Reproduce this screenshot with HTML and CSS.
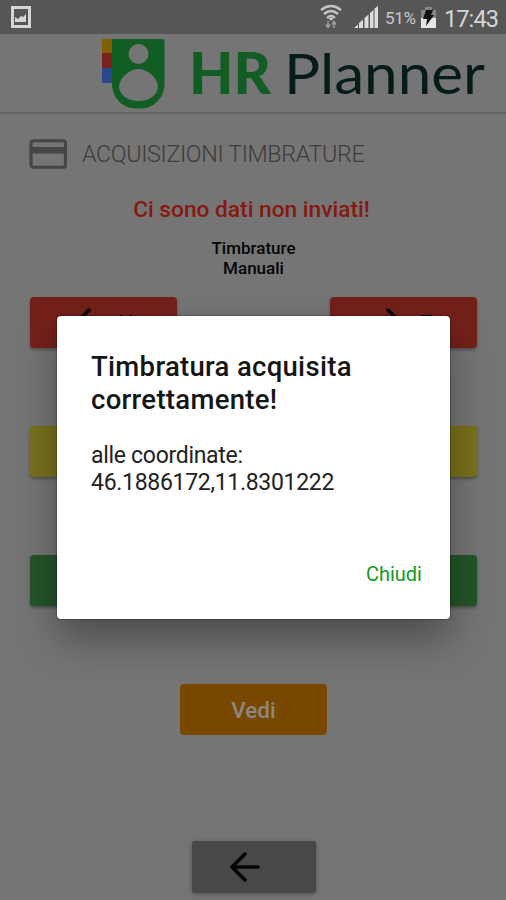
FILE: index.html
```html
<!DOCTYPE html>
<html lang="it">
<head>
<meta charset="utf-8">
<title>HR Planner</title>
<link rel="stylesheet" href="styles.css">
</head>
<body>
<div class="status">
  <svg class="picture" width="20" height="22" viewBox="0 0 20 22"><path fill="#d6d6d6" fill-rule="evenodd" d="M0 0h20v22H0zM3 3v16h14V3zM4 16v-5l3 2 3-3 2 1 3-3v8z"/></svg>
  <div class="status-right">
    <svg width="128" height="34" viewBox="0 0 128 34">
      <g fill="none" stroke="#c4c4c4" stroke-width="2.400"><path d="M1 10Q11 2 21 10M4 14Q11 8 18 14M7 18Q11 14 15 18"/></g>
      <path fill="#cfcfcf" d="M8.500 18h5L11 21z"/>
      <path fill="none" stroke="#a0a0a0" stroke-width="1.500" d="M8 21v6M6 24.500l2 3 2-3M14 28v-6M12 24.500l2-3 2 3"/>
      <path fill="#ddd" d="M34 28l4-3.500V28zM39 28v-5l4-3.500v8.500zM44.500 28V18l4-3.500V28zM50 28V13l3.500-3v18zM54.500 28V8.500L58 6v22z"/>
      <text x="65" y="24" class="percent" textLength="31">51%</text>
      <path fill="#858585" d="M105 7h7v3h4v8h-15v-8h4z"/><path fill="#e5e5e5" d="M101 18h15v10h-15z"/>
      <path fill="#111" d="M106 10h7l-2 5h3l-8 11 1-7h-4z"/>
    </svg>
    <span class="clock">17:43</span>
  </div>
</div>
<header class="header">
  <svg width="506" height="79" viewBox="0 34 506 79">
    <path fill="#806000" d="M102 39h11v15h-11z"/><path fill="#7c201b" d="M102 53h11v16h-11z"/><path fill="#27498a" d="M102 68h11v15h-11z"/>
    <path fill="#115d23" d="M112 39h50q2.500 0 2.500 3v42c0 14-11 24.500-24 24.500h-5c-13 0-23.500-11-23.500-24.500z"/>
    <circle cx="138.500" cy="54" r="10" fill="#757575"/>
    <path fill="#757575" d="M119 86C120 77 130 69 138.500 69S157 77 158 86C158 95 149 101 138.500 101S119 95 119 86z"/>
    <text class="brand-hr" x="189" y="94" textLength="82" lengthAdjust="spacingAndGlyphs">HR</text>
    <text class="brand-planner" x="284" y="94" textLength="201" lengthAdjust="spacingAndGlyphs">Planner</text>
  </svg>
</header>
<main class="page">
  <h1 class="title">
    <svg width="38" height="30" viewBox="0 0 38 30"><rect x="2" y="1.750" width="34.500" height="26.500" rx="2.500" fill="none" stroke="#454545" stroke-width="3.200"/><path fill="#454545" d="M2 8h34v6.500H2z"/></svg>
    <span>ACQUISIZIONI TIMBRATURE</span>
  </h1>
  <p class="warning">Ci sono dati non inviati!</p>
  <p class="mode">Timbrature<br>Manuali</p>
  <div class="row">
    <div class="btn red"><svg width="30" height="30" viewBox="0 0 30 30"><path class="arrow" d="M29 15H2M15 2L2 15l13 13"/></svg><span>U</span></div>
    <div class="btn red"><svg width="30" height="30" viewBox="0 0 30 30"><path class="arrow" d="M-1 15h27M13 2l13 13-13 13"/></svg><span>E</span></div>
  </div>
  <div class="row"><div class="btn yellow"></div><div class="btn yellow"></div></div>
  <div class="row"><div class="btn green"></div><div class="btn green"></div></div>
  <div class="row single"><div class="btn orange">Vedi</div></div>
  <div class="back"><svg width="30" height="30" viewBox="0 0 30 30"><path class="arrow" d="M28 15H2M15 2L2 15l13 13"/></svg></div>
</main>
<section class="dialog">
  <h2>Timbratura acquisita<br>correttamente!</h2>
  <p class="message">alle coordinate:<br>46.1886172,11.8301222</p>
  <div class="close">Chiudi</div>
</section>
</body>
</html>
```

FILE: styles.css
```css
* { box-sizing: border-box; }
body { margin: 0; width: 506px; height: 900px; overflow: hidden; position: relative; background: #757575; font-family: Roboto, sans-serif; color: #050505; }
svg { display: block; flex: none; }
h1, h2, p { margin: 0; }
.status { height: 34px; background: #565656; display: flex; justify-content: space-between; align-items: center; padding: 0 8px 0 11px; }
.status-right { display: flex; align-items: center; }
.percent { font-size: 17px; fill: #c8c8c8; }
.clock { width: 54px; margin-left: -4px; margin-top: 3px; font-size: 23.500px; letter-spacing: -.9px; line-height: 30px; color: #d6d6d6; text-align: right; white-space: nowrap; }
.header { height: 80px; border-bottom: 2px solid #626262; }
.brand-hr { font: 900 57px Lato, sans-serif; fill: #115d23; }
.brand-planner { font: 400 57px Lato, sans-serif; fill: #061c1b; }
.page { padding: 25px 29px 0; }
.title { height: 30px; display: flex; align-items: center; gap: 15px; font-size: 23.300px; letter-spacing: -.36px; font-weight: 300; color: #3c3c3c; white-space: nowrap; }
.warning { margin-top: 27px; text-align: center; font-size: 22.700px; font-weight: 500; line-height: 28px; color: #86190f; margin-right: 3px; }
.mode { margin-top: 14px; text-align: center; font-size: 17px; font-weight: 500; line-height: 20px; margin-right: -1px; }
.row { display: flex; justify-content: space-between; margin: 78px 0 0 1px; }
.mode + .row { margin-top: 19px; }
.row.single { justify-content: center; }
.btn { width: 147px; height: 51px; border-radius: 4px; display: flex; align-items: center; justify-content: center; gap: 14px; font-size: 22.500px; font-weight: 500; box-shadow: 0 2px 3px rgba(0,0,0,.3); }
.red { background: #74201a; }
.yellow { background: #79721c; }
.green { background: #245528; }
.orange { background: #784800; color: #8c8782; box-shadow: none; }
.arrow { fill: none; stroke: #050505; stroke-width: 3.500px; stroke-linecap: round; }
.back { width: 124px; height: 52px; margin: 106px 0 0 163px; border-radius: 3px; background: #484848; display: flex; align-items: center; padding-left: 38px; box-shadow: 0 1px 4px rgba(0,0,0,.35); }
.dialog { position: absolute; left: 57px; top: 316px; width: 393px; height: 303px; padding: 34px; border-radius: 4px; background: #fff; box-shadow: 0 0 2px rgba(0,0,0,.7), 0 20px 40px rgba(0,0,0,.35); }
.dialog h2 { font-size: 27.500px; letter-spacing: .3px; font-weight: 500; line-height: 33px; color: #151515; white-space: nowrap; }
.message { margin-top: 26px; font-size: 23px; letter-spacing: -.3px; line-height: 27px; color: #222; white-space: nowrap; }
.close { margin: 66px -6px 0 0; text-align: right; font-size: 20px; line-height: 25px; color: #149a1c; }
```
